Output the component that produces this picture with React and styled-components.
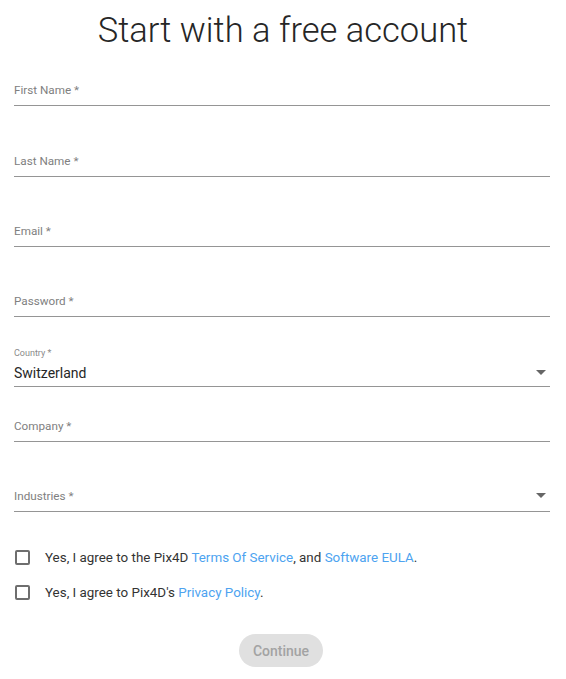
import React from 'react';
import styled, { createGlobalStyle } from 'styled-components';

const GlobalStyle = createGlobalStyle`
    body {
        margin: 0;
        background: #fff;
        font-family: Roboto, "Liberation Sans", sans-serif;
    }
`;

const Page = styled.div`
    width: 566px;
    padding: 8px 16px 0 14px;
    box-sizing: border-box;
`;

const Title = styled.h1`
    margin: 0;
    font-size: 34.5px;
    line-height: 45px;
    font-weight: 300;
    color: #262626;
    text-align: center;
    padding-left: 2px;
`;

const Field = styled.div`
    height: ${p => p.h}px;
    display: flex;
    align-items: flex-end;
    justify-content: space-between;
    border-bottom: 1px solid #959595;
    padding-bottom: ${p => p.pb || 8}px;
    box-sizing: content-box;
`;

const Label = styled.span`
    font-size: 11.7px;
    line-height: 14px;
    color: #808080;
`;

const Stack = styled.div`
    display: flex;
    flex-direction: column;
`;

const SmallLabel = styled.span`
    font-size: 9px;
    line-height: 11px;
    color: #8a8a8a;
    margin-bottom: 5px;
`;

const Value = styled.span`
    font-size: 14px;
    line-height: 18px;
    color: #262626;
`;

const Arrow = styled.span`
    width: 0;
    height: 0;
    border-left: 5px solid transparent;
    border-right: 5px solid transparent;
    border-top: 5px solid #666;
    margin: 0 4px ${p => p.mb || 0}px 0;
`;

const Checks = styled.div`
    padding-top: 28px;
    display: flex;
    flex-direction: column;
`;

const CheckRow = styled.label`
    display: flex;
    align-items: center;
    height: 35px;
    font-size: 13.4px;
    color: #333;
`;

const Box = styled.span`
    width: 11px;
    height: 11px;
    border: 2px solid #6e6e6e;
    border-radius: 2px;
    margin: 0 15px 0 1px;
    flex-shrink: 0;
`;

const Link = styled.a`
    color: #4da3f0;
    text-decoration: none;
`;

const Footer = styled.div`
    display: flex;
    justify-content: center;
    padding-top: 24px;
    padding-right: 2px;
`;

const Button = styled.button`
    height: 33px;
    width: 84px;
    border: none;
    border-radius: 17px;
    background: #e0e0e0;
    color: #a3a3a3;
    font-family: inherit;
    font-size: 14px;
    font-weight: 500;
`;

const fields = [
    { label: 'First Name *', h: 44 },
    { label: 'Last Name *', h: 62 },
    { label: 'Email *', h: 61 },
    { label: 'Password *', h: 61 },
];

export default function App () {
    return (
        <Page>
            <GlobalStyle />
            <Title>Start with a free account</Title>
            {
                fields.map(f => (
                    <Field key={f.label} h={f.h}>
                        <Label>{f.label}</Label>
                    </Field>
                ))
            }
            <Field h={65} pb={4}>
                <Stack>
                    <SmallLabel>Country *</SmallLabel>
                    <Value>Switzerland</Value>
                </Stack>
                <Arrow mb={7} />
            </Field>
            <Field h={46}>
                <Label>Company *</Label>
            </Field>
            <Field h={61}>
                <Label>Industries *</Label>
                <Arrow mb={5} />
            </Field>
            <Checks>
                <CheckRow>
                    <Box />
                    <span>
                        Yes, I agree to the Pix4D <Link>Terms Of Service</Link>, and <Link>Software EULA</Link>.
                    </span>
                </CheckRow>
                <CheckRow>
                    <Box />
                    <span>
                        Yes, I agree to Pix4D's <Link>Privacy Policy</Link>.
                    </span>
                </CheckRow>
            </Checks>
            <Footer>
                <Button disabled>Continue</Button>
            </Footer>
        </Page>
    );
}
